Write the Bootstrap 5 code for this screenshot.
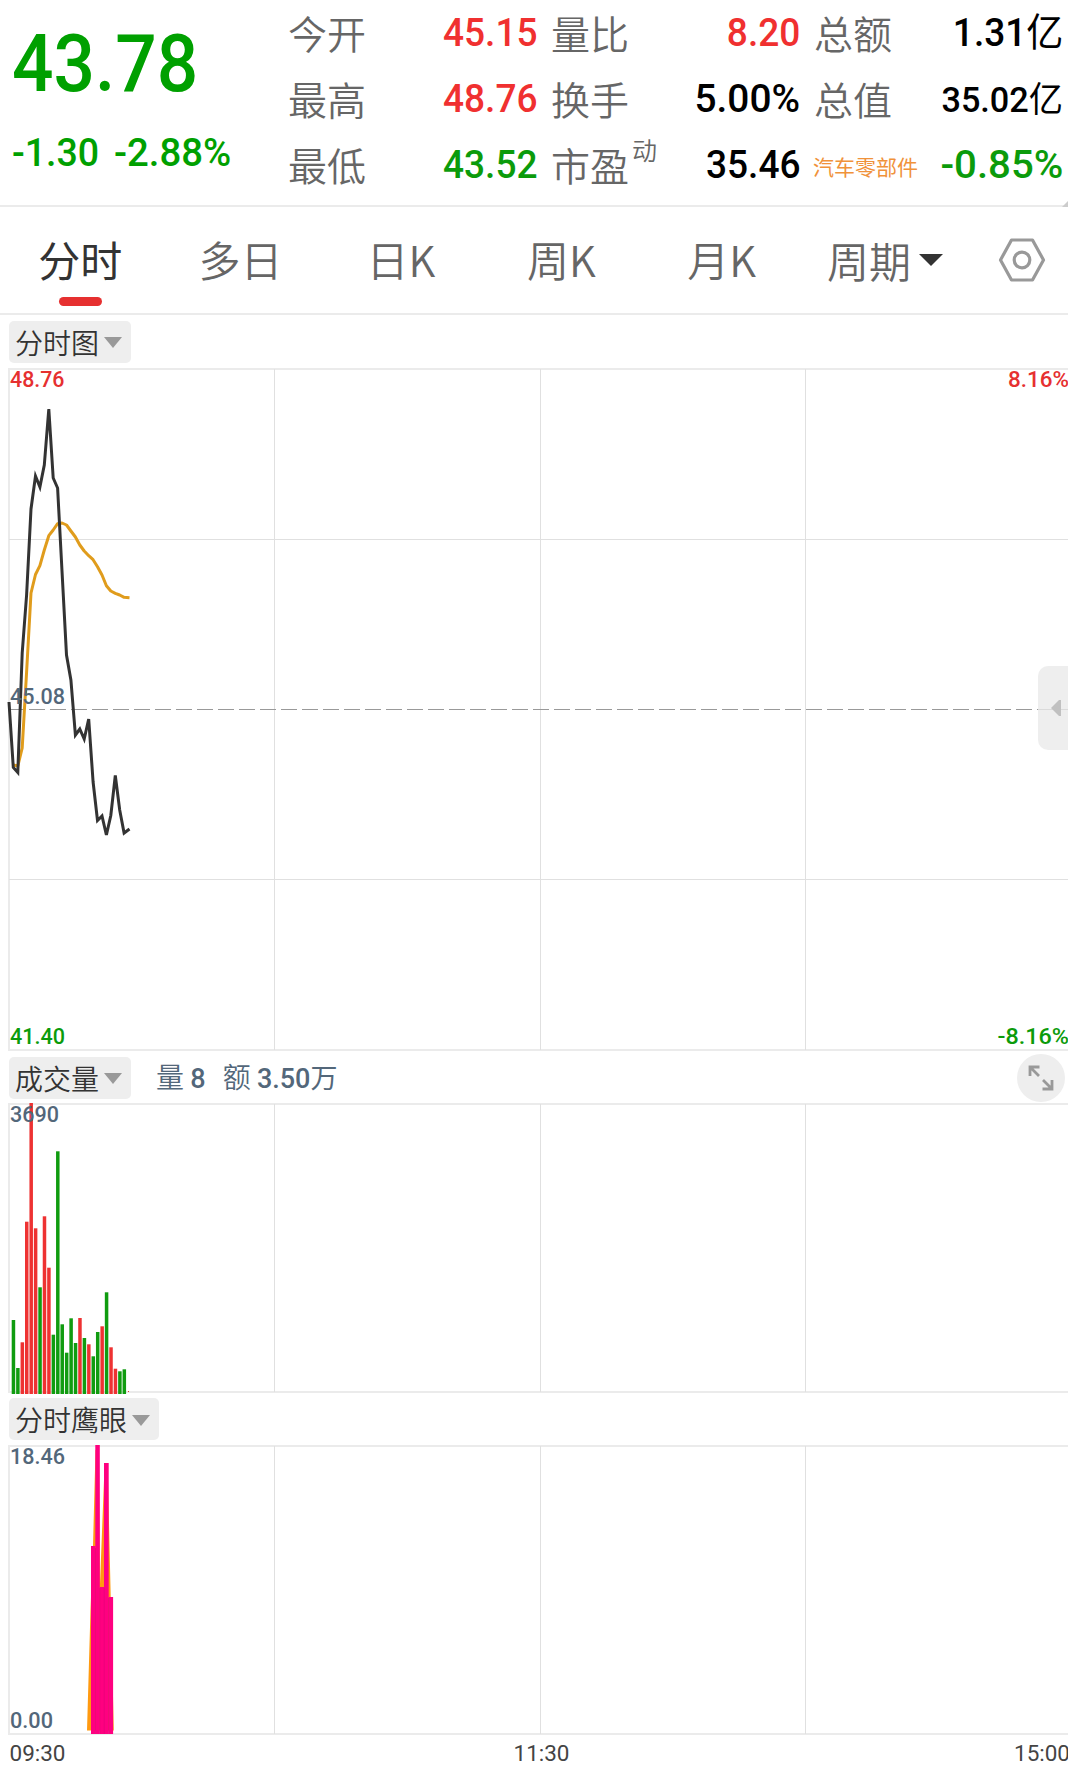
<!DOCTYPE html>
<html lang="zh-CN">
<head>
<meta charset="utf-8">
<meta name="viewport" content="width=device-width, initial-scale=1">
<title>分时行情</title>
<link href="https://cdn.jsdelivr.net/npm/bootstrap@5.3.0/dist/css/bootstrap.min.css" rel="stylesheet">
<style>
:root{--up:#f03030;--down:#0b9b0b;--slate:#53677a;--rule:#ebebeb}
body{width:1068px;height:1776px;overflow:hidden;background:#fff;font-family:"Noto Sans CJK SC",sans-serif;color:#333}
.num{font-family:Roboto,"Noto Sans CJK SC",sans-serif;font-weight:500;white-space:nowrap;display:inline-block}
.up{color:var(--up)}.down{color:#00a000}
.quote-head{height:207px;border-bottom:2px solid var(--rule)}
.quote-main{width:288px;padding-left:12px}
.last-price{font-size:80px;line-height:90px;margin-top:19px;transform:scaleX(.912);transform-origin:0 50%}
.change-line{font-size:38.5px;line-height:50px;margin-top:19px;gap:13px}
.change-line .num{transform-origin:0 50%;transform:scaleX(.975)}
.change-line .num.pct{transform:scaleX(.995)}
.stat-col{height:198px}
.stat-line{height:66px;line-height:66px;font-size:39px}
.stat-line .lbl{color:#666;font-weight:350;margin-top:-1px}
.stat-line .num{font-size:39px;color:#000;transform:scaleX(.95);transform-origin:100% 50%}
.stat-line .num.up{color:var(--up)}.stat-line .num.down{color:#0b9b0b}
.stat-line .num.compact{font-size:35.500px;transform:scaleX(.965);padding-top:1px}
.stat-line .num.pct{transform:scaleX(.995)}
.stat-line .num.pct.signed{transform:scaleX(1.03)}
.stat-line .sector{color:#f0923a;font-size:21px;padding-top:1px;margin-left:-1px}
.stat-line sup{font-size:25px;top:-21px;line-height:1;margin-left:3px}
.yi{font-weight:400}
.corner{right:0;top:201px}
.period-tabs{height:108px;border-bottom:2px solid var(--rule)}
.period-tabs .tab-item{width:160.4px;height:106px;line-height:104px;font-size:42px;color:#666;text-align:center;font-weight:350}
.period-tabs .tab-item.on{color:#333;font-weight:400}
.tab-mark{left:59px;bottom:7px;width:43px;height:9px;border-radius:5px;background:#e63030}
.panel-bar{padding-left:9px}
.pick{background:#eee;border-radius:5px;height:42px;line-height:40px;padding:0 9px 0 6px;font-size:28px;color:#333;gap:5px;font-weight:350}
.pick svg{margin-top:2px}
.vol-info{font-size:28px;color:var(--slate);margin-left:25px;line-height:42px;font-weight:350}
.vol-info .num{font-size:27px;font-weight:500}
.chart{display:block;width:1068px}
.chart text{font-family:Roboto,sans-serif;font-size:22.8px;font-weight:500}
.side-tab{right:0;top:666px;width:30px;height:84px;border-radius:10px 0 0 10px;background:rgba(234,234,234,.8)}
.grow-btn{width:48px;height:48px;border-radius:50%;background:#eee;margin-right:3px}
</style>
</head>
<body class="position-relative">
<header class="quote-head d-flex">
  <div class="quote-main flex-shrink-0 d-flex flex-column align-items-start">
    <div class="num last-price down">43.78</div>
    <div class="change-line d-flex down">
      <span class="num">-1.30</span>
      <span class="num pct">-2.88%</span>
    </div>
  </div>
  <div class="stat-col" style="width:249px">
    <div class="stat-line d-flex justify-content-between"><span class="lbl">今开</span><span class="num up">45.15</span></div>
    <div class="stat-line d-flex justify-content-between"><span class="lbl">最高</span><span class="num up">48.76</span></div>
    <div class="stat-line d-flex justify-content-between"><span class="lbl">最低</span><span class="num down">43.52</span></div>
  </div>
  <div class="stat-col" style="width:249px;margin-left:14px">
    <div class="stat-line d-flex justify-content-between"><span class="lbl">量比</span><span class="num up">8.20</span></div>
    <div class="stat-line d-flex justify-content-between"><span class="lbl">换手</span><span class="num pct">5.00%</span></div>
    <div class="stat-line d-flex justify-content-between"><span class="lbl">市盈<sup>动</sup></span><span class="num">35.46</span></div>
  </div>
  <div class="stat-col" style="width:249px;margin-left:14px">
    <div class="stat-line d-flex justify-content-between"><span class="lbl">总额</span><span class="num">1.31<span class="yi">亿</span></span></div>
    <div class="stat-line d-flex justify-content-between"><span class="lbl">总值</span><span class="num compact">35.02<span class="yi">亿</span></span></div>
    <div class="stat-line d-flex justify-content-between"><span class="sector">汽车零部件</span><span class="num down pct signed">-0.85%</span></div>
  </div>
</header>
<svg class="corner position-absolute" width="6" height="6"><path d="M6 0V6H0Z" fill="#ccc"/></svg>

<nav class="period-tabs d-flex">
  <div class="tab-item on position-relative">分时<span class="tab-mark position-absolute"></span></div>
  <div class="tab-item">多日</div>
  <div class="tab-item">日K</div>
  <div class="tab-item">周K</div>
  <div class="tab-item">月K</div>
  <div class="tab-item d-flex align-items-center justify-content-center" style="width:166px">周期<svg style="margin-left:8px" width="24" height="12"><path d="M0 0H24L12 12Z" fill="#333"/></svg></div>
  <div class="d-flex align-items-center ms-auto" style="margin-right:22px">
    <svg width="48" height="46" viewBox="0 0 48 46" fill="none" stroke="#999" stroke-width="3.200" stroke-linejoin="round"><path d="M13.500 3H34.500L45.500 23L34.500 43H13.500L2.500 23Z"/><circle cx="24" cy="23" r="7.800"/></svg>
  </div>
</nav>

<div class="panel-bar d-flex align-items-center" style="height:53px">
  <div class="pick d-flex align-items-center">分时图<svg width="18" height="11"><path d="M0 0H18L9 11Z" fill="#999"/></svg></div>
</div>
<svg class="chart" height="684" viewBox="0 368 1068 684">
  <g stroke="#ebebeb" stroke-width="2" fill="none"><path d="M8 369H1068M8 1050H1068M9 369V1050"/></g>
  <path d="M9 539.500H1068M9 879.500H1068M274.500 369V1050M540.500 369V1050M805.500 369V1050" stroke="#e0e0e0" fill="none"/>
  <path d="M8 709.500H1068" stroke="#999" stroke-dasharray="16 5" fill="none"/>
  <polyline fill="none" stroke="#e09c1c" stroke-width="3" stroke-linejoin="round" points="13.300,765 17.800,766 22.200,748 26.600,672 31,593 35.500,574.500 39.900,565.700 44.300,550 48.800,535.700 53.200,530 57.600,523.700 62,523 66.500,525 70.900,531 75.400,537 79.800,545 84.200,551 88.700,555.700 93.100,559.700 97.500,566.700 102,575 106.400,585.700 110.800,591 115.300,593.300 119.700,595 124.100,597.300 129.500,597.700"/>
  <polyline fill="none" stroke="#333" stroke-width="3" points="9,702 13.300,767.500 17.800,772.500 22.200,653 26.600,595 31,509 35.500,476 39.900,487 44.300,465 48.800,409 53.200,478 57.600,488 62,571 66.500,655 70.900,680 75.400,735 79.800,729 84.200,739 88.700,719 93.100,782 97.500,820.500 102,816 106.400,835 110.800,815.500 115.300,775.500 119.700,810 124.100,833 129.500,829"/>
  <text x="10" y="387" fill="#e63030" textLength="54.500" lengthAdjust="spacingAndGlyphs">48.76</text>
  <text x="1008" y="387" fill="#e63030" textLength="61" lengthAdjust="spacingAndGlyphs">8.16%</text>
  <text x="10" y="703.500" fill="#53677a" textLength="55" lengthAdjust="spacingAndGlyphs">45.08</text>
  <text x="10" y="1043.500" fill="#0b9b0b" textLength="55" lengthAdjust="spacingAndGlyphs">41.40</text>
  <text x="997.500" y="1043.500" fill="#0b9b0b" textLength="71.500" lengthAdjust="spacingAndGlyphs">-8.16%</text>
</svg>

<div class="panel-bar d-flex align-items-center" style="height:51px">
  <div class="pick d-flex align-items-center">成交量<svg width="18" height="11"><path d="M0 0H18L9 11Z" fill="#999"/></svg></div>
  <div class="vol-info">量 <span class="num">8</span></div>
  <div class="vol-info" style="margin-left:17px">额 <span class="num">3.50<span class="yi">万</span></span></div>
  <div class="grow-btn ms-auto d-flex align-items-center justify-content-center">
    <svg width="26" height="26" viewBox="0 0 26 26" fill="none" stroke="#999" stroke-width="2.800"><path d="M2 11V2H11.500M2 2L11 11M24 15V24H14.500M24 24L15 15"/></svg>
  </div>
</div>
<svg class="chart" height="292" viewBox="0 1103 1068 292">
  <g stroke="#ebebeb" stroke-width="2" fill="none"><path d="M8 1104H1068M8 1392H1068M9 1104V1392"/></g>
  <path d="M274.500 1104V1392M540.500 1104V1392M805.500 1104V1392" stroke="#e0e0e0" fill="none"/>
  <g id="volBars"></g>
  <rect x="128" y="1391" width="1" height="1" fill="#e63030"/>
  <text x="10" y="1121.500" fill="#53677a" textLength="49" lengthAdjust="spacingAndGlyphs">3690</text>
</svg>

<div class="panel-bar d-flex align-items-center" style="height:50px;padding-bottom:2px">
  <div class="pick d-flex align-items-center">分时鹰眼<svg width="18" height="11"><path d="M0 0H18L9 11Z" fill="#999"/></svg></div>
</div>
<svg class="chart" height="331" viewBox="0 1445 1068 331">
  <g stroke="#ebebeb" stroke-width="2" fill="none"><path d="M8 1446H1068M8 1734H1068M9 1446V1734"/></g>
  <path d="M274.500 1446V1734M540.500 1446V1734M805.500 1446V1734" stroke="#e0e0e0" fill="none"/>
  <path d="M87 1730.500L90.500 1610L93 1546L95.500 1450H99L100 1584L104 1480H108L113.800 1730.500Z" fill="#ff9a10"/>
  <g fill="#ff0080"><rect x="91" y="1546" width="4.500" height="188"/><rect x="95.300" y="1445" width="4.500" height="289"/><rect x="99.700" y="1587" width="4.500" height="147"/><rect x="104" y="1463" width="4.700" height="271"/><rect x="108.600" y="1597" width="4.500" height="137"/></g>
  <path d="M95.500 1548V1734M99.800 1588V1734M104.200 1588V1734M108.600 1598V1734" stroke="#e00078" stroke-width=".6"/>
  <text x="10" y="1463.500" fill="#53677a" textLength="55" lengthAdjust="spacingAndGlyphs">18.46</text>
  <text x="10" y="1727.500" fill="#53677a" textLength="43" lengthAdjust="spacingAndGlyphs">0.00</text>
  <g fill="#444"><text x="9.500" y="1760.500" textLength="56" lengthAdjust="spacingAndGlyphs" style="font-weight:400">09:30</text>
  <text x="513.500" y="1760.500" textLength="56" lengthAdjust="spacingAndGlyphs" style="font-weight:400">11:30</text>
  <text x="1014" y="1760.500" textLength="56" lengthAdjust="spacingAndGlyphs" style="font-weight:400">15:00</text></g>
</svg>

<div class="side-tab position-absolute d-flex align-items-center"><svg width="10" height="16" style="margin-left:13px"><path d="M0 8L8 0H10V16H8Z" fill="#c0c0c0"/></svg></div>

<script>
// per-minute volume: direction and bar top
const bars = "g1320 g1368 r1342.3 r1221.700 r1102.300 r1228.300 g1287.300 r1216.300 r1267.700 g1334.700 g1151.300 g1324.300 g1352.700 g1318.300 g1343 r1318 g1338 r1344.300 g1356.300 g1332 r1326.300 g1292.300 r1347.300 r1368.700 g1371.300 g1369.300".split(" ");
document.getElementById("volBars").innerHTML = bars.map((b, i) => {
  const y = parseFloat(b.slice(1)), x = 13.3 + i * 4.435 - 1.6;
  return `<rect x="${x.toFixed(2)}" y="${y}" width="3.500" height="${(1394 - y).toFixed(1)}" fill="${b[0] === "g" ? "#109c10" : "#ee3232"}"/>`;
}).join("");
</script>
<script src="https://cdn.jsdelivr.net/npm/bootstrap@5.3.0/dist/js/bootstrap.bundle.min.js"></script>
</body>
</html>
